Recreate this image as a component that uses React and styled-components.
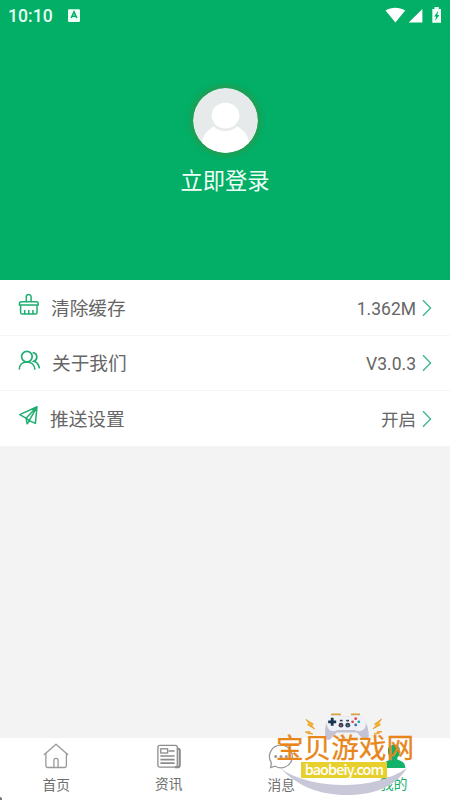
import React from "react";
import styled, { createGlobalStyle } from "styled-components";

const GlobalStyle = createGlobalStyle`
    * {
        box-sizing: border-box;
    }
    body {
        margin: 0;
        background: #f3f3f3;
        font-family: Roboto, "Noto Sans CJK SC", sans-serif;
    }
`

const Screen = styled.div`
    position: relative;
    display: flex;
    flex-direction: column;
    width: 450px;
    height: 800px;
    overflow: hidden;
    background: #f3f3f3;
`

const HeaderStyled = styled.header`
    height: 280px;
    flex: none;
    background: #03ae66;
    color: #fff;

    .status{
        display: flex;
        align-items: center;
        height: 32px;
        padding: 0 7px 0 8px;
    }
    .time{
        width: 44px;
        font-size: 17.6px;
        line-height: 32px;
        font-weight: 500;
        color: #e6fff3;
    }
    .badge{
        margin-left: 16px;
        margin-top: -2px;
    }
    .signals{
        display: flex;
        align-items: center;
        margin-left: auto;
    }
`

const Profile = styled.div`
    display: flex;
    flex-direction: column;
    align-items: center;
    padding-top: 56px;

    .avatar{
        border-radius: 50%;
        box-shadow: 0 0 4px 3px rgba(70, 140, 60, 0.5);
    }
    .login{
        margin-top: 12px;
        font-size: 22.3px;
        line-height: 33px;
        color: #effff7;
    }
`

const Menu = styled.ul`
    margin: 0;
    padding: 0;
    list-style: none;
    background: #fff;
`

const MenuItem = styled.li`
    display: flex;
    align-items: center;
    height: 55.5px;
    padding: 0 18px;
    border-bottom: 1px solid #f5f5f5;
    color: #666;

    .icon{
        flex: none;
        margin-top: -4px;
    }
    .label{
        margin-left: ${props => props.$gap}px;
        margin-top: 3px;
        font-size: 18.7px;
        line-height: 28px;
    }
    .value{
        margin-left: auto;
        font-size: 17.5px;
        line-height: 28px;
        margin-right: 6px;
        margin-top: 3px;
    }
    .arrow{
        margin-top: 1px;
    }
`

const TabBar = styled.nav`
    display: grid;
    grid-template-columns: repeat(4, 1fr);
    height: 62px;
    margin-top: auto;
    background: #fff;
`

const Tab = styled.div`
    display: flex;
    flex-direction: column;
    align-items: center;
    padding-top: 5px;
    font-size: 13.7px;
    line-height: 20px;
    color: ${props => (props.$active ? "#19b06b" : "#6e6e6e")};

    span{
        margin-top: ${props => props.$lift ? 5 : 6}px;
    }
`

const Watermark = styled.div`
    position: absolute;
    left: 270px;
    top: 706px;
    width: 150px;
    height: 94px;

    svg{
        position: absolute;
        left: 0;
        top: 0;
    }
    .name{
        position: absolute;
        left: 6px;
        top: 28px;
        font-size: 27.6px;
        line-height: 30px;
        color: #e8861b;
        white-space: nowrap;
        -webkit-text-stroke: 0.3px #e8861b;
    }
    .site{
        position: absolute;
        left: 31px;
        top: 56px;
        width: 86px;
        height: 16px;
        background: #e8d02c;
        color: #fff;
        font-family: "Noto Sans CJK SC", sans-serif;
        font-size: 14.4px;
        font-weight: 500;
        letter-spacing: -0.85px;
        line-height: 14px;
        text-align: center;
    }
`

const Corner = styled.i`
    position: absolute;
    left: 0;
    bottom: 0;
    width: 2px;
    height: 3px;
    background: #777;
    border-top-right-radius: 2px;
`

function BadgeIcon(){
    return(
        <svg className="badge" width="13" height="13" viewBox="0 0 13 13">
            <rect x="0" y="0.3" width="12" height="12.7" rx="1.2" fill="#effff7" />
            <path d="M3.2 9 L6 3 L8.8 9 M4.3 7.3 H7.7" fill="none" stroke="#03ae66" strokeWidth="1.6" />
        </svg>
    )
}

function SignalIcons(){
    return(
        <svg width="58" height="20" viewBox="0 0 58 20">
            <path d="M0.5 4.5 C6.5 0.7 14 0.7 20.2 4.5 L10.4 16.4 Z" fill="#fff" />
            <path d="M23.7 16.5 L37.4 3 V16.5 Z" fill="#fff" />
            <path d="M47.3 3 H49.5 V1 H53.8 V3 H56 V16.8 H47.3 Z" fill="#effff7" />
            <path d="M53.2 4.8 L49.2 10.4 H51.1 L50.2 14.8 L54.3 9 H52.3 Z" fill="#03ae66" />
        </svg>
    )
}

function Avatar(){
    return(
        <svg className="avatar" width="65" height="65" viewBox="0 0 65 65">
            <defs>
                <clipPath id="face"><circle cx="32.5" cy="32.5" r="32.5" /></clipPath>
            </defs>
            <g clipPath="url(#face)">
                <rect width="65" height="65" fill="#e6eaea" />
                <path d="M8 59 C9 47 15 42 22 37.6 H43 C50 42 56 47 57 59 V66 H8 Z" fill="#fff" />
                <ellipse cx="32.5" cy="27.6" rx="15.2" ry="14.2" fill="#fff" stroke="#e6eaea" strokeWidth="2.6" />
            </g>
        </svg>
    )
}

function BrushIcon(){
    return(
        <svg className="icon" width="22" height="24" viewBox="0 0 22 24" fill="none" stroke="#1fad70" strokeWidth="1.5">
            <path d="M8.3 8.8 V3.9 a2.4 2.4 0 0 1 4.8 0 V8.8" />
            <path d="M3.3 8.8 H18.3 a1.9 1.9 0 0 1 1.9 1.9 V12 H1.4 V10.7 a1.9 1.9 0 0 1 1.9 -1.9 Z" />
            <path d="M2.6 12.3 V19.5 a1.6 1.6 0 0 0 1.6 1.6 H17.4 a1.6 1.6 0 0 0 1.6 -1.6 V12.3 M6.7 17 V21 M10.8 17 V21 M14.9 17 V21" />
        </svg>
    )
}

function PeopleIcon(){
    return(
        <svg className="icon" width="23" height="24" viewBox="0 0 23 24" fill="none" stroke="#1fad70" strokeWidth="1.7">
            <circle cx="8.9" cy="7.6" r="5.3" />
            <path d="M1.3 20.6 C1.3 16 4.4 13 8.9 13 C13.4 13 16.6 16 16.9 20.6" />
            <path d="M14.6 3.6 C20 4.3 20 10.6 15.8 12.3 C19.2 13.2 20.9 15.4 21.4 19.3" />
        </svg>
    )
}

function PlaneIcon(){
    return(
        <svg className="icon" width="21" height="24" viewBox="0 0 21 24" fill="none" stroke="#1fad70" strokeWidth="1.5" strokeLinejoin="round">
            <path d="M19 2.8 L1.8 10.6 L8 14.2 L19 2.8 L17.4 19.4 L11.2 16.6 L8 14.2 L9.2 19.8 L11.6 16.8 M19 2.8 L11.2 16.6" />
        </svg>
    )
}

function Arrow(){
    return(
        <svg className="arrow" width="10" height="18" viewBox="0 0 10 18">
            <path d="M1 1.2 L8.6 9 L1 16.8" fill="none" stroke="#43b98a" strokeWidth="1.4" />
        </svg>
    )
}

function HomeIcon(){
    return(
        <svg width="26" height="26" viewBox="0 0 26 26" fill="none" stroke="#999" strokeWidth="1.3" strokeLinejoin="round" strokeLinecap="round">
            <path d="M1.3 11.6 L13 1.2 L24.7 11.6" />
            <path d="M2.9 10.3 V22.7 a1.8 1.8 0 0 0 1.8 1.8 H21.6 a1.8 1.8 0 0 0 1.8 -1.8 V10.3" />
            <path d="M10.9 24.3 V17.4 a2.1 2.1 0 0 1 4.2 0 V24.3" />
        </svg>
    )
}

function NewsIcon(){
    return(
        <svg width="26" height="26" viewBox="0 0 26 26" fill="none" stroke="#8c8c8c" strokeWidth="1.3">
            <rect x="1.9" y="2.4" width="19.4" height="21.8" rx="2" />
            <path d="M21.6 5.9 H22.4 a1.3 1.3 0 0 1 1.3 1.3 V22.2 a2 2 0 0 1 -2 2 H19" strokeWidth="2.2" />
            <rect x="4.8" y="5.8" width="6.8" height="4.2" />
            <path d="M12.5 8 H18.6 M4.4 13 H18.6 M4.4 16.6 H18.6 M4.4 20.2 H18.6" strokeWidth="1.7" />
        </svg>
    )
}

function MessageIcon(){
    return(
        <svg width="26" height="26" viewBox="0 0 26 26">
            <path d="M13 2.2 A11.3 11.3 0 1 1 7.2 23.2 L2.6 24.6 L3.4 19.8 A11.3 11.3 0 0 1 13 2.2 Z" fill="none" stroke="#999" strokeWidth="1.3" />
            <g fill="#999">
                <circle cx="7.7" cy="13.4" r="1.5" />
                <circle cx="13" cy="13.4" r="1.5" />
                <circle cx="18.3" cy="13.4" r="1.5" />
            </g>
        </svg>
    )
}

function MineIcon(){
    return(
        <svg width="26" height="26" viewBox="0 0 26 26" fill="#12b26b">
            <path d="M13 1.8 C17.5 1.8 19.3 4.5 19 8.5 C18.7 11.8 17.5 13.5 16.3 14.8 V16.4 C20 18 24 18.5 24.4 25 H1.6 C2 18.5 6 18 9.7 16.4 V14.8 C8.5 13.5 7.3 11.8 7 8.5 C6.7 4.5 8.5 1.8 13 1.8 Z" />
        </svg>
    )
}

function SiteMark(){
    return(
        <Watermark>
            <svg width="150" height="94" viewBox="0 0 150 94">
                <path d="M11 63 C43 84 104 85 137 62 C124 83 100 89 77 89 C49 89 28 80 11 63 Z" fill="#c9c8d8" />
                <path d="M62 9.3 V8.5 H70 V9.5 M82 9.5 V8.5 H89 V9.3" stroke="#d8a13a" strokeWidth="1.8" fill="none" />
                <path d="M61 10 C67 8.5 70 9.8 73 10.6 H79 C83 9.6 87 8.6 92 10.2 C97 15 98.8 25 98.8 30 C98 35 93 34 91 31 L87 26.5 H67 L62 31 C60 35 56 35 55.2 30 C54.6 23 56 14 61 10 Z" fill="#c2c3d4" />
                <path d="M61 10 C67 8.5 70 9.8 73 10.6 H79 C83 9.6 87 8.6 92 10.2 C96 12 97.6 20 94 23 C91 26 87 25.5 85 24 H68 C64 26 60 25.5 58 22 C55.5 17 57 11.5 61 10 Z" fill="#f0f0f7" />
                <path d="M62.2 11.8 V19.8 M58.2 15.8 H66.2" stroke="#17344f" strokeWidth="2.8" />
                <g fill="#2f4056">
                    <circle cx="71" cy="19.2" r="2.4" />
                    <circle cx="77.8" cy="19.2" r="2.4" />
                    <rect x="69.8" y="13.8" width="2.8" height="1.6" />
                    <rect x="76.2" y="13.8" width="2.8" height="1.6" />
                </g>
                <circle cx="71" cy="19.4" r="1" fill="#cf4655" />
                <circle cx="77.8" cy="19.4" r="1" fill="#358e9b" />
                <circle cx="85.7" cy="12.7" r="1.4" fill="#d94755" />
                <circle cx="85.7" cy="18.9" r="1.4" fill="#316dba" />
                <circle cx="82.6" cy="15.8" r="1.4" fill="#d94755" />
                <circle cx="88.8" cy="15.8" r="1.4" fill="#27a5a3" />
                <g fill="#f4b52d" stroke="#e99a27" strokeWidth="0.8">
                    <path d="M36 13.5 L43.3 18 L41.9 19.6 L44.6 23 L37.5 18.8 L39 17.2 Z" />
                    <path d="M35 26 L40 25.6 L39.8 26.8 L42.8 28 L37.7 27.6 L38 26.8 Z" />
                    <path d="M111.5 13 L104.6 18 L106.2 19.3 L103 22.8 L110.4 18.9 L108.8 17.2 Z" />
                    <path d="M112 25.6 L107.5 25.4 L107.6 26.4 L104 28 L109.3 27.4 L109 26.6 Z" />
                </g>
            </svg>
            <div className="name">宝贝游戏网</div>
            <div className="site">baobeiy.com</div>
        </Watermark>
    )
}

function App(){
    return(
        <Screen>
            <GlobalStyle />
            <HeaderStyled>
                <div className="status">
                    <span className="time">10:10</span>
                    <BadgeIcon />
                    <div className="signals">
                        <SignalIcons />
                    </div>
                </div>
                <Profile>
                    <Avatar />
                    <div className="login">立即登录</div>
                </Profile>
            </HeaderStyled>
            <Menu>
                <MenuItem $gap={11}>
                    <BrushIcon />
                    <span className="label">清除缓存</span>
                    <span className="value">1.362M</span>
                    <Arrow />
                </MenuItem>
                <MenuItem $gap={11}>
                    <PeopleIcon />
                    <span className="label">关于我们</span>
                    <span className="value">V3.0.3</span>
                    <Arrow />
                </MenuItem>
                <MenuItem $gap={11}>
                    <PlaneIcon />
                    <span className="label">推送设置</span>
                    <span className="value">开启</span>
                    <Arrow />
                </MenuItem>
            </Menu>
            <TabBar>
                <Tab>
                    <HomeIcon />
                    <span>首页</span>
                </Tab>
                <Tab $lift>
                    <NewsIcon />
                    <span>资讯</span>
                </Tab>
                <Tab>
                    <MessageIcon />
                    <span>消息</span>
                </Tab>
                <Tab $active $lift>
                    <MineIcon />
                    <span>我的</span>
                </Tab>
            </TabBar>
            <SiteMark />
            <Corner />
        </Screen>
    )
}

export default App;
